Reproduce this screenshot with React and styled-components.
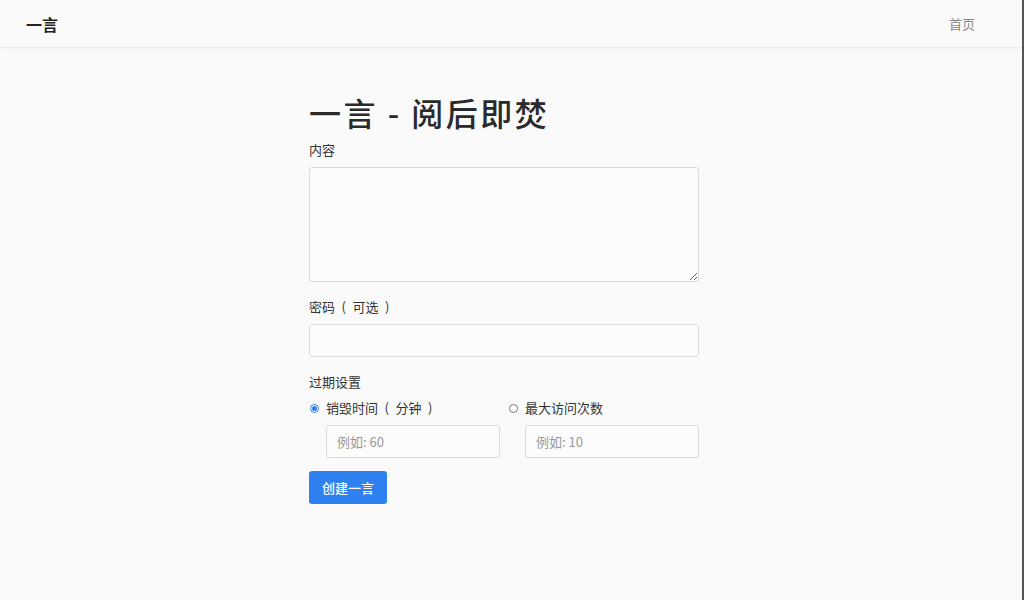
import React from "react";
import styled, { createGlobalStyle } from "styled-components";

const GlobalStyle = createGlobalStyle`
  html, body {
    margin: 0;
    padding: 0;
    background: #fafafa;
    font-family: "Noto Sans CJK SC", "Noto Sans", "Liberation Sans", sans-serif;
    color: #333;
  }
  * {
    box-sizing: border-box;
  }
`;

const Page = styled.div`
  width: 1024px;
  height: 600px;
  overflow: hidden;
  background: #fafafa;
  border-right: 2px solid #555;
`;

const NavBar = styled.header`
  height: 48px;
  display: flex;
  align-items: center;
  justify-content: space-between;
  padding: 0 47px 0 26px;
  border-bottom: 1px solid #ececec;
  background: #fafafa;
  box-shadow: 0 1px 2px rgba(0, 0, 0, 0.03);
`;

const Brand = styled.a`
  font-size: 16px;
  font-weight: 700;
  color: #222;
  text-decoration: none;
`;

const NavLink = styled.a`
  font-size: 13px;
  color: #8a8a8a;
  text-decoration: none;
`;

const Main = styled.main`
  width: 390px;
  margin: 0 auto;
  padding-top: 41px;
  transform: translateX(-7px);
`;

const Title = styled.h1`
  margin: 0 0 6px;
  font-size: 32px;
  font-weight: 500;
  letter-spacing: 2.5px;
  line-height: 46px;
  color: #2a2a2a;
`;

const Label = styled.label`
  display: block;
  font-size: 13px;
  line-height: 18px;
  color: #333;
  margin-bottom: 8px;
`;

const Field = styled.div`
  margin-bottom: 16px;
`;

const TextArea = styled.textarea`
  display: block;
  width: 100%;
  height: 115px;
  border: 1px solid #dcdcdc;
  border-radius: 3px;
  background: #fcfcfc;
  font-family: inherit;
  padding: 6px 10px;
  outline: none;
`;

const Input = styled.input`
  display: block;
  width: ${(p) => (p.$indent ? "174px" : "100%")};
  margin-left: ${(p) => (p.$indent ? "17px" : "0")};
  height: 33px;
  border: 1px solid #dcdcdc;
  border-radius: 3px;
  background: #fcfcfc;
  font-family: "Noto Sans CJK SC", "Liberation Sans", sans-serif;
  font-size: 13px;
  padding: 0 10px;
  color: #333;
  outline: none;
  &::placeholder {
    color: #999;
  }
`;

const Options = styled.div`
  display: grid;
  grid-template-columns: 1fr 1fr;
  column-gap: 8px;
  margin-bottom: 13px;
`;

const Option = styled.div`
  display: flex;
  flex-direction: column;
  gap: 8px;
`;

const RadioLabel = styled.label`
  display: flex;
  align-items: center;
  gap: 7px;
  font-size: 13px;
  line-height: 18px;
  color: #333;
`;

const Radio = styled.span`
  width: 9px;
  height: 9px;
  border-radius: 50%;
  border: 1px solid ${(p) => (p.$checked ? "#2f7ff0" : "#777")};
  background: #fff;
  display: flex;
  align-items: center;
  justify-content: center;
  margin-left: 1px;
  &::after {
    content: "";
    width: 5px;
    height: 5px;
    border-radius: 50%;
    background: ${(p) => (p.$checked ? "#2f7ff0" : "transparent")};
  }
`;

const Button = styled.button`
  height: 33px;
  padding: 0 13px;
  border: none;
  border-radius: 3px;
  background: #2f80f0;
  color: #fff;
  font-family: inherit;
  font-size: 13px;
  font-weight: 500;
  cursor: pointer;
`;

export default function App() {
  return (
    <>
      <GlobalStyle />
      <Page>
        <NavBar>
          <Brand href="#">一言</Brand>
          <NavLink href="#">首页</NavLink>
        </NavBar>
        <Main>
          <Title>一言 - 阅后即焚</Title>
          <Field>
            <Label>内容</Label>
            <TextArea />
          </Field>
          <Field>
            <Label>密码{"\u2002(\u2002"}可选{"\u2002)"}</Label>
            <Input type="password" />
          </Field>
          <Label>过期设置</Label>
          <Options>
            <Option>
              <RadioLabel>
                <Radio $checked />
                销毁时间{"\u2002(\u2002"}分钟{"\u2002)"}
              </RadioLabel>
              <Input $indent placeholder="例如: 60" />
            </Option>
            <Option>
              <RadioLabel>
                <Radio />
                最大访问次数
              </RadioLabel>
              <Input $indent placeholder="例如: 10" />
            </Option>
          </Options>
          <Button>创建一言</Button>
        </Main>
      </Page>
    </>
  );
}
